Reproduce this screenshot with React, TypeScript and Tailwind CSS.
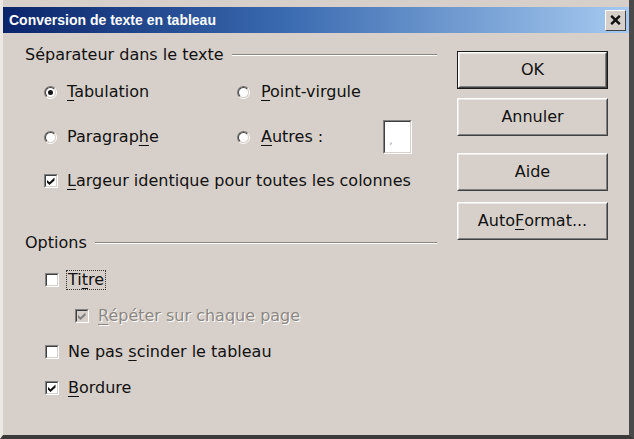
import React from "react";

const U = ({ children }: { children: React.ReactNode }) => (
  <span className="underline decoration-1 underline-offset-[3px]">{children}</span>
);

function Radio({ checked }: { checked?: boolean }) {
  return (
    <div className="w-[13px] h-[13px] rounded-full border border-t-[#7a7570] border-l-[#7a7570] border-b-white border-r-white shrink-0">
      <div className="w-full h-full rounded-full border border-t-[#404040] border-l-[#404040] border-b-[#d7d0ca] border-r-[#d7d0ca] bg-white flex items-center justify-center">
        {checked && <div className="w-[5px] h-[5px] rounded-full bg-[#111]" />}
      </div>
    </div>
  );
}

function Check({ checked, disabled }: { checked?: boolean; disabled?: boolean }) {
  return (
    <div className="w-[14px] h-[14px] border border-t-[#808080] border-l-[#808080] border-b-white border-r-white shrink-0">
      <div
        className={
          "w-full h-full border border-t-[#404040] border-l-[#404040] border-b-[#d7d0ca] border-r-[#d7d0ca] flex items-center justify-center " +
          (disabled ? "bg-[#d7d0ca]" : "bg-white")
        }
      >
        {checked && (
          <svg width="10" height="10" viewBox="0 0 10 10">
            <polygon points="1,4 3.5,6.2 8.5,1.5 8.5,4.5 3.5,9 1,6.8" fill={disabled ? "#808080" : "#111"} />
          </svg>
        )}
      </div>
    </div>
  );
}

function Btn({ children, def }: { children: React.ReactNode; def?: boolean }) {
  return (
    <div className={"w-[151px] h-[38px] " + (def ? "border border-[#1a1a1a]" : "")}>
      <div className="w-full h-full border border-t-white border-l-white border-b-[#404040] border-r-[#404040]">
        <div className="w-full h-full border border-t-[#ece8e4] border-l-[#ece8e4] border-b-[#808080] border-r-[#808080] flex items-center justify-center">
          {children}
        </div>
      </div>
    </div>
  );
}

function GroupHeader({ label }: { label: string }) {
  return (
    <div className="flex items-center h-[20px]">
      <span>{label}</span>
      <div className="flex-1 ml-[8px] flex flex-col">
        <div className="h-px bg-[#8a847e]" />
        <div className="h-px bg-white" />
      </div>
    </div>
  );
}

export default function App() {
  return (
    <div className="w-[634px] h-[439px] overflow-hidden bg-[#eeebe8] font-['DejaVu_Sans',sans-serif] text-[16px] leading-[20px] text-[#111]">
      <div className="w-full h-full pt-[7px] pl-[3px] border-b-[4px] border-b-[#3a3a3a] border-r-[5px] border-r-[#4a4a4a] flex flex-col bg-[#d7d0ca] border-l-[3px] border-l-[#ece8e4]">
        {/* title bar */}
        <div className="h-[26px] -ml-[3px] bg-[linear-gradient(90deg,#0a246a_0%,#3a6ab0_45%,#a6caf0_100%)] flex items-center pl-[6px] pr-[3px]">
          <span className="text-white font-bold text-[14px] font-['Liberation_Sans',sans-serif]">
            Conversion de texte en tableau
          </span>
          <div className="ml-auto w-[21px] h-[21px] border border-t-white border-l-white border-b-[#404040] border-r-[#404040] bg-[#d7d0ca] flex items-center justify-center">
            <svg width="11" height="10" viewBox="0 0 11 10">
              <path d="M1.2 0.8 L9.8 9.2 M9.8 0.8 L1.2 9.2" stroke="#111" strokeWidth="2.4" />
            </svg>
          </div>
        </div>

        {/* body */}
        <div className="flex flex-1 pl-[19px] pt-[12px]">
          {/* left */}
          <div className="w-[412px] flex flex-col">
            <GroupHeader label="Séparateur dans le texte" />
            <div className="pl-[19px] flex flex-col">
              <div className="mt-[17px] h-[20px] flex items-center">
                <div className="w-[193px] flex items-center">
                  <Radio checked />
                  <span className="ml-[10px]"><U>T</U>abulation</span>
                </div>
                <div className="flex items-center">
                  <Radio />
                  <span className="ml-[11px]"><U>P</U>oint-virgule</span>
                </div>
              </div>
              <div className="mt-[25px] h-[20px] flex items-center">
                <div className="w-[193px] flex items-center">
                  <Radio />
                  <span className="ml-[10px]">Paragrap<U>h</U>e</span>
                </div>
                <div className="flex items-center">
                  <Radio />
                  <span className="ml-[11px]"><U>A</U>utres :</span>
                </div>
                <div className="ml-[60px] w-[29px] h-[34px] border border-t-[#808080] border-l-[#808080] border-b-white border-r-white">
                  <div className="w-full h-full border border-t-[#404040] border-l-[#404040] border-b-[#d7d0ca] border-r-[#d7d0ca] bg-white flex items-end pl-[4px] pb-[6px]">
                    <span className="text-[11px] leading-[11px] text-[#9a9a9a]">,</span>
                  </div>
                </div>
              </div>
              <div className="mt-[24px] h-[20px] flex items-center">
                <Check checked />
                <span className="ml-[9px]"><U>L</U>argeur identique pour toutes les colonnes</span>
              </div>
            </div>

            <div className="mt-[42px]">
              <GroupHeader label="Options" />
            </div>
            <div className="pl-[20px] flex flex-col">
              <div className="mt-[17px] h-[20px] flex items-center">
                <Check />
                <span className="ml-[7px] px-[1px] border border-dotted border-[#333] leading-[18px]">Ti<U>t</U>re</span>
              </div>
              <div className="mt-[16px] h-[20px] flex items-center pl-[30px]">
                <Check checked disabled />
                <span className="ml-[9px] text-[#8c8782] [text-shadow:1px_1px_0_#ffffff]"><U>R</U>épéter sur chaque page</span>
              </div>
              <div className="mt-[16px] h-[20px] flex items-center">
                <Check />
                <span className="ml-[9px]">Ne pas <U>s</U>cinder le tableau</span>
              </div>
              <div className="mt-[16px] h-[20px] flex items-center">
                <Check checked />
                <span className="ml-[9px]"><U>B</U>ordure</span>
              </div>
            </div>
          </div>

          {/* right buttons */}
          <div className="ml-[20px] pt-[6px] flex flex-col">
            <Btn def>OK</Btn>
            <div className="mt-[9px]"><Btn>Annuler</Btn></div>
            <div className="mt-[17px]"><Btn>Aide</Btn></div>
            <div className="mt-[11px]"><Btn>Auto<U>F</U>ormat...</Btn></div>
          </div>
        </div>
      </div>
    </div>
  );
}
